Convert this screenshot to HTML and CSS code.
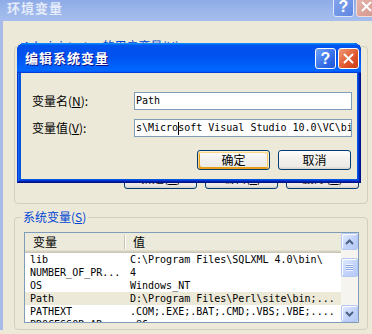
FILE: index.html
```html
<!DOCTYPE html>
<html lang="zh-CN">
<head>
  <meta charset="UTF-8">
  <title>环境变量</title>
  <link rel="stylesheet" href="styles.css">
</head>
<body>

  <!-- 环境变量 window (inactive, behind the dialog) -->
  <div class="window">
    <div class="titlebar inactive">
      <span class="title-text">环境变量</span>
      <div class="title-buttons">
        <span class="tbtn help">?</span>
        <span class="tbtn close">
          <svg width="11" height="11" viewBox="0 0 11 11"><path d="M1.5 1.5l8 8M9.5 1.5l-8 8" stroke="#fff" stroke-width="2" stroke-linecap="round"/></svg>
        </span>
      </div>
    </div>

    <div class="client">
      <fieldset class="group user-group">
        <legend>Administrator 的用户变量(<u>U</u>)</legend>
        <!-- user variable list, hidden under the edit dialog -->
        <div class="listview short"></div>
        <div class="button-row">
          <button class="btn tall">新建(<u>N</u>)</button>
          <button class="btn tall">编辑(<u>E</u>)</button>
          <button class="btn tall">删除(<u>D</u>)</button>
        </div>
      </fieldset>

      <fieldset class="group system-group">
        <legend>系统变量(<u>S</u>)</legend>
        <div class="listview">
          <div class="lv-main">
            <div class="lv-header"><span class="col-a">变量</span><span class="col-b">值</span></div>
            <div class="lv-row"><span>lib</span><span>C:\Program Files\SQLXML 4.0\bin\</span></div>
            <div class="lv-row"><span>NUMBER_OF_PR...</span><span>4</span></div>
            <div class="lv-row"><span>OS</span><span>Windows_NT</span></div>
            <div class="lv-row selected"><span>Path</span><span>D:\Program Files\Perl\site\bin;...</span></div>
            <div class="lv-row"><span>PATHEXT</span><span>.COM;.EXE;.BAT;.CMD;.VBS;.VBE;....</span></div>
            <div class="lv-row"><span>PROCESSOR_AR...</span><span>x86</span></div>
          </div>
          <div class="scrollbar">
            <div class="sb-btn">
              <svg width="9" height="6" viewBox="0 0 9 6"><path d="M1 5l3.5-3.5L8 5" fill="none" stroke="#4D6185" stroke-width="2"/></svg>
            </div>
            <div class="sb-thumb"><span class="grip"></span></div>
            <div class="sb-track"></div>
            <div class="sb-btn">
              <svg width="9" height="6" viewBox="0 0 9 6"><path d="M1 1l3.5 3.5L8 1" fill="none" stroke="#4D6185" stroke-width="2"/></svg>
            </div>
          </div>
        </div>
      </fieldset>
    </div>
  </div>

  <!-- 编辑系统变量 dialog -->
  <div class="dialog">
    <div class="titlebar active">
      <span class="title-text">编辑系统变量</span>
      <div class="title-buttons">
        <span class="tbtn help">?</span>
        <span class="tbtn close">
          <svg width="11" height="11" viewBox="0 0 11 11"><path d="M1.5 1.5l8 8M9.5 1.5l-8 8" stroke="#fff" stroke-width="2" stroke-linecap="round"/></svg>
        </span>
      </div>
    </div>

    <div class="dialog-body">
      <div class="form">
        <label>变量名(<u>N</u>):</label>
        <div class="field">Path</div>
        <label>变量值(<u>V</u>):</label>
        <div class="field">s\Micro<span class="caret"></span>soft Visual Studio 10.0\VC\bin</div>
      </div>
      <div class="dialog-buttons">
        <button class="btn default">确定</button>
        <button class="btn">取消</button>
      </div>
    </div>
  </div>

</body>
</html>
```

FILE: styles.css
```css
/* Base */
* {
  box-sizing: border-box;
}

html {
  overflow: hidden;
}

body {
  margin: 0;
  width: 372px;
  height: 334px;
  display: flow-root;
  position: relative;
  overflow: hidden;
  background: #ECE9D8;
  font-family: "Noto Sans CJK SC", "Liberation Sans", sans-serif;
  font-size: 12px;
  color: #000;
}

u {
  text-decoration: underline;
  text-underline-offset: 1px;
}

/* Title bars */
.titlebar {
  height: 30px;
  display: flex;
  align-items: center;
  justify-content: space-between;
  padding: 0 5px 0 7px;
}

.title-text {
  font-size: 13px;
  font-weight: bold;
  letter-spacing: 1px;
  line-height: 16px;
  color: #fff;
}

.titlebar.inactive {
  background: linear-gradient(180deg, #7697e7, #94afe8 6%, #8eabe7 30%, #9ab5ea 60%, #a6beee 100%);
}

.titlebar.inactive .title-text {
  color: #E4EBFA;
  padding-top: 4px;
}

.titlebar.active {
  margin: 0 -4px;
  border-radius: 8px 8px 0 0;
  background: linear-gradient(180deg, #0997ff, #0053ee 8%, #0050ee 40%, #06f 88%, #06f 93%, #005bff 95%, #003dd7 96%, #003dd7);
  padding: 0 2px 0 8px;
}

.titlebar.active .title-text {
  text-shadow: 1px 1px #0f1089;
}

.title-buttons {
  display: flex;
  gap: 2px;
}

.tbtn {
  width: 21px;
  height: 21px;
  border: 1px solid #fff;
  border-radius: 3px;
  display: flex;
  align-items: center;
  justify-content: center;
  color: #fff;
  font: bold 16px/19px "Liberation Sans", sans-serif;
}

.tbtn.help {
  background: linear-gradient(135deg, #6FA1FA, #2D66E4 70%, #2458D6);
}

.tbtn.close {
  background: linear-gradient(135deg, #EE9A78, #E0552A 60%, #C93E17);
}

.inactive .tbtn.help {
  background: linear-gradient(135deg, #86A7EE, #5E86E2);
  border-color: #DDE6FA;
}

.inactive .tbtn.close {
  background: linear-gradient(135deg, #E7B7AE, #D3948A);
  border-color: #F2DCDA;
}

/* Outer window */
.window {
  width: 382px;
  margin-top: -9px;
}

.client {
  border-left: 3px solid #A9B9E8;
  padding: 17px 0 0 11px;
}

/* Group boxes */
.group {
  margin: 0;
  width: 354px;
  border: 1px solid #D0D0BF;
  border-radius: 4px;
  padding: 6px 8px 14px 9px;
}

.group legend {
  margin-left: -3px;
  padding: 0 2px;
  line-height: 16px;
  color: #0046D5;
}

.system-group {
  margin-top: 5px;
  padding: 7px 8px 6px 9px;
}

/* List views */
.listview {
  height: 91px;
  border: 1px solid #7F9DB9;
  background: #fff;
  display: flex;
}

.listview.short {
  height: 98px;
}

.lv-main {
  flex: 1;
  overflow: hidden;
}

.lv-header {
  display: grid;
  grid-template-columns: 100px 1fr;
  align-items: center;
  height: 20px;
  padding-bottom: 2px;
  background: #EBEADB;
  box-shadow: inset 0 -1px #CBC7B8, inset 0 -2px #D6D2C2, inset 0 -3px #E2DECD;
}

.lv-header span {
  height: 14px;
  line-height: 14px;
}

.lv-header .col-a {
  padding-left: 8px;
  border-right: 1px solid #C7C5B2;
  box-shadow: 1px 0 #fff;
}

.lv-header .col-b {
  padding-left: 8px;
}

.lv-row {
  display: grid;
  grid-template-columns: 100px 1fr;
  height: 13px;
  font: 10px/13px "DejaVu Sans Mono", "Liberation Mono", monospace;
  white-space: nowrap;
}

.lv-row span {
  overflow: hidden;
  padding-left: 5px;
}

.lv-row.selected {
  background: #ECE9D8;
}

/* Scrollbar */
.scrollbar {
  width: 17px;
  display: flex;
  flex-direction: column;
  background: #F5F4EF;
}

.sb-btn,
.sb-thumb {
  height: 17px;
  border: 1px solid #B4C6F2;
  border-radius: 2px;
  background: linear-gradient(135deg, #E2EAFD, #C3D4FA 55%, #B4C9F6);
  box-shadow: inset 1px 1px #fff;
  display: flex;
  align-items: center;
  justify-content: center;
}

.sb-thumb {
  height: 19px;
  margin-top: 8px;
}

.grip {
  width: 7px;
  height: 7px;
  background: repeating-linear-gradient(180deg, #EEF3FE 0 1px, #8CA8E6 1px 2px);
}

.sb-track {
  flex: 1;
}

/* Buttons */
.button-row {
  display: flex;
  justify-content: flex-end;
  gap: 8px;
  margin-top: 8px;
}

.btn {
  width: 73px;
  height: 20px;
  padding: 0;
  border: 1px solid #003C74;
  border-radius: 3px;
  background: linear-gradient(180deg, #fff, #F3F2EE 40%, #ECEBE6 86%, #D6D0C5);
  font: 12px/18px "Noto Sans CJK SC", "Liberation Sans", sans-serif;
  color: #000;
}

.btn.tall {
  height: 23px;
}

.btn.default {
  box-shadow: inset -1px 1px #fff0cf, inset 1px 2px #fdd889, inset -2px 2px #fbc761, inset 2px -2px #e5a01a;
}

/* Edit dialog */
.dialog {
  position: absolute;
  left: 17px;
  top: 43px;
  width: 344px;
  height: 140px;
  padding: 0 4px 4px;
  border-radius: 8px 8px 0 0;
  background: #ECE9D8;
  box-shadow: inset -1px -1px #00138c, inset 1px 1px #0831d9, inset -2px -2px #001ea0, inset 2px 2px #166aee, inset -3px -3px #003bda, inset 3px 3px #0855dd, inset -4px -4px #0855dd, inset 4px 4px #0855dd;
}

.dialog-body {
  padding: 19px 0 0 11px;
}

.form {
  display: grid;
  grid-template-columns: 102px 218px;
  grid-auto-rows: 18px;
  row-gap: 9px;
  align-items: center;
}

.form label {
  line-height: 16px;
}

.field {
  height: 18px;
  border: 1px solid #7F9DB9;
  background: #fff;
  padding-left: 1px;
  font: 10px/16px "DejaVu Sans Mono", "Liberation Mono", monospace;
  white-space: nowrap;
  overflow: hidden;
}

.caret {
  display: inline-block;
  width: 1px;
  height: 13px;
  margin-right: -1px;
  background: #000;
  vertical-align: middle;
}

.dialog-buttons {
  display: flex;
  justify-content: flex-end;
  gap: 8px;
  margin-top: 13px;
  padding-right: 6px;
}
```
